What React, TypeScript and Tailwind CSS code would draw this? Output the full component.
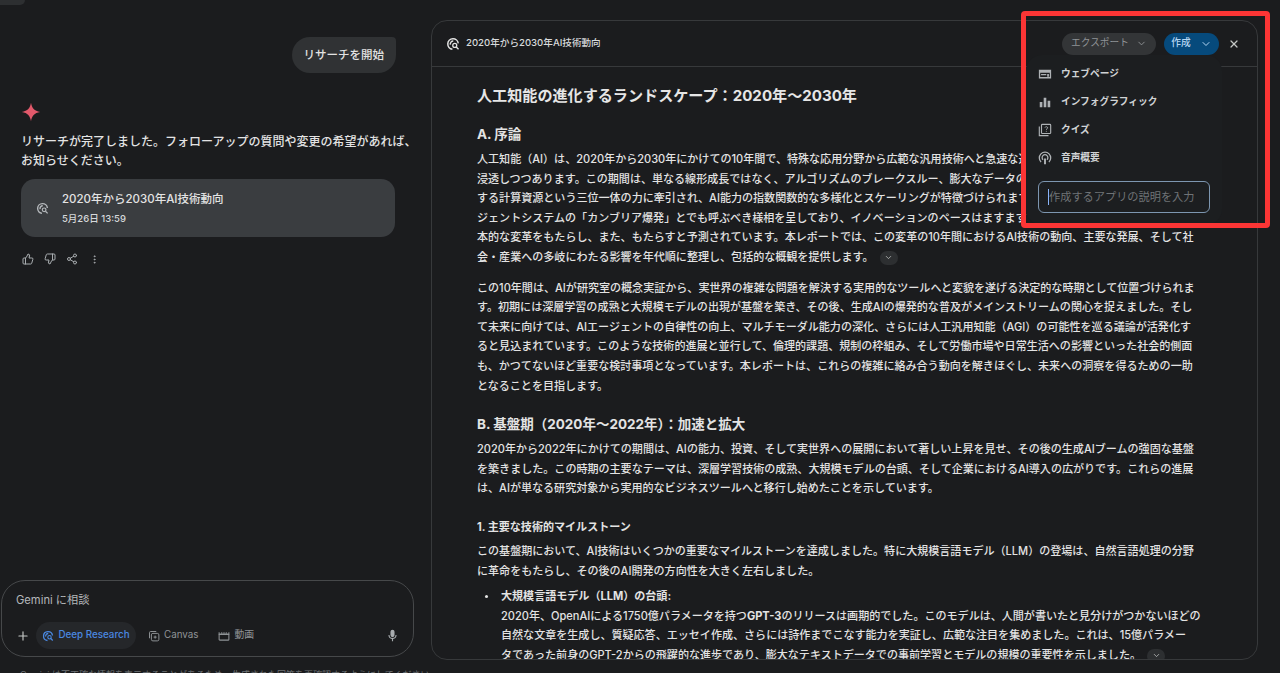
import type { ReactNode } from 'react'
import { ChevronDown, X, Plus, ThumbsUp, ThumbsDown, Share2, MoreVertical } from 'lucide-react'

function ResearchIcon({ className }: { className?: string }) {
  return (
    <svg viewBox="0 0 24 24" fill="none" stroke="currentColor" strokeWidth="2.6" className={className}>
      <path d="M11 21a9 9 0 1 1 10-10" />
      <path d="M7.500 13a5 5 0 0 1 5-6" />
      <circle cx="15" cy="14.500" r="3.400" strokeWidth="2.200" />
      <path d="M17.500 17l4 4" strokeWidth="2.400" />
    </svg>
  )
}

function MoreChip() {
  return (
    <span className="ml-[6px] inline-flex h-[14px] w-[18px] items-center justify-center rounded-full bg-[#2d2f31] align-middle">
      <ChevronDown size={9} className="text-[#c4c7c5]" />
    </span>
  )
}

function MenuItem({ icon, label }: { icon: ReactNode; label: string }) {
  return (
    <div className="flex h-7 items-center gap-[9px] pl-[12px]">
      <span className="flex h-[14px] w-[14px] items-center justify-center text-[#aeb2b5]">{icon}</span>
      <span className="text-[9.700px] font-bold text-[#cfd2d4]">{label}</span>
    </div>
  )
}

function CreateMenu() {
  return (
    <div className="absolute left-[594px] top-[34px] z-10 w-[196px] rounded-2xl bg-[#1c1e20] pt-[5px] pb-3">
      <MenuItem
        label="ウェブページ"
        icon={
          <svg viewBox="0 0 16 16" className="h-[14px] w-[14px]" fill="currentColor">
            <path d="M1 3h14v10H1zM2.500 6.500v5h11v-5zM3.500 8h6v1.300h-6zM10.500 8h2v3h-2z" fillRule="evenodd" />
          </svg>
        }
      />
      <MenuItem
        label="インフォグラフィック"
        icon={
          <svg viewBox="0 0 16 16" className="h-[14px] w-[14px]" fill="currentColor">
            <path d="M2 8h3v6H2zM6.500 3h3v11h-3zM11 6.500h3V14h-3z" />
          </svg>
        }
      />
      <MenuItem
        label="クイズ"
        icon={
          <svg viewBox="0 0 16 16" className="h-[14px] w-[14px]" fill="none" stroke="currentColor" strokeWidth="1.300">
            <rect x="4" y="1.500" width="10.500" height="10.500" rx="1" />
            <path d="M1.500 4v10.500H12" />
            <path d="M8 5.200c.4-1.400 3-1.300 3 .3 0 1.100-1.500 1.200-1.500 2.300M9.500 9v1" strokeWidth="1" />
          </svg>
        }
      />
      <MenuItem
        label="音声概要"
        icon={
          <svg viewBox="0 0 16 16" className="h-[14px] w-[14px]" fill="none" stroke="currentColor" strokeWidth="1.500">
            <path d="M3.500 12.500a6.500 6.500 0 1 1 9 0" />
            <path d="M5.800 10a3.300 3.300 0 1 1 4.400 0" />
            <path d="M8 8.500V15" strokeWidth="2.200" />
          </svg>
        }
      />
      <div className="mx-3 mt-[9px] flex h-8 items-center rounded-md border border-[#7d96b0] px-[9px]">
        <span className="h-4 w-px bg-[#8ab4f8]" />
        <span className="text-[11.200px] text-[#6f7376]">作成するアプリの説明を入力</span>
      </div>
    </div>
  )
}

function Para({ lines, className }: { lines: ReactNode[]; className?: string }) {
  return (
    <div className={`text-[11.050px] font-medium leading-[19.600px] text-[#e3e3e3] ${className ?? ''}`}>
      {lines.map((l, i) => (
        <p key={i} className="whitespace-nowrap">
          {l}
        </p>
      ))}
    </div>
  )
}

function ReportPanel() {
  return (
    <section className="relative flex h-[640px] w-[827px] shrink-0 flex-col overflow-hidden rounded-2xl border border-[#37393b] bg-[#1b1c1e]">
      <header className="flex h-[46px] shrink-0 items-center border-b border-[#37393b] pr-[17px] pl-[14px]">
        <ResearchIcon className="h-[14px] w-[14px] text-[#e3e3e3]" />
        <span className="ml-[6px] text-[9.600px] font-medium text-[#d8dadc]">2020年から2030年AI技術動向</span>
        <div className="ml-auto flex items-center gap-2">
          <button className="flex h-[22px] w-[94px] items-center justify-center gap-[7px] rounded-full bg-[#333537] text-[9.700px] text-[#8f9396]">
            エクスポート
            <ChevronDown size={11} />
          </button>
          <button className="flex h-[22px] w-[55px] items-center justify-center gap-[9px] rounded-full bg-[#064a7c] text-[9.700px] font-medium text-[#b5d6f2]">
            作成
            <ChevronDown size={12} />
          </button>
          <X size={12} strokeWidth={2.500} className="ml-[1px] text-[#c4c7c5]" />
        </div>
      </header>
      <div className="flex-1 overflow-hidden pt-[18px] pl-[45px]">
        <h1 className="text-[15.100px] leading-[22px] font-bold text-[#e6e6e6]">人工知能の進化するランドスケープ：2020年～2030年</h1>
        <h2 className="mt-[17px] mb-[6px] text-[13.500px] leading-[20px] font-bold text-[#e3e3e3]">A. 序論</h2>
        <Para
          lines={[
            '人工知能（AI）は、2020年から2030年にかけての10年間で、特殊な応用分野から広範な汎用技術へと急速な進',
            '浸透しつつあります。この期間は、単なる線形成長ではなく、アルゴリズムのブレークスルー、膨大なデータの',
            'する計算資源という三位一体の力に牽引され、AI能力の指数関数的な多様化とスケーリングが特徴づけられます',
            'ジェントシステムの「カンブリア爆発」とでも呼ぶべき様相を呈しており、イノベーションのペースはますます',
            '本的な変革をもたらし、また、もたらすと予測されています。本レポートでは、この変革の10年間におけるAI技術の動向、主要な発展、そして社',
            <>
              会・産業への多岐にわたる影響を年代順に整理し、包括的な概観を提供します。
              <MoreChip />
            </>,
          ]}
        />
        <Para
          className="mt-[11px]"
          lines={[
            'この10年間は、AIが研究室の概念実証から、実世界の複雑な問題を解決する実用的なツールへと変貌を遂げる決定的な時期として位置づけられま',
            'す。初期には深層学習の成熟と大規模モデルの出現が基盤を築き、その後、生成AIの爆発的な普及がメインストリームの関心を捉えました。そし',
            'て未来に向けては、AIエージェントの自律性の向上、マルチモーダル能力の深化、さらには人工汎用知能（AGI）の可能性を巡る議論が活発化す',
            'ると見込まれています。このような技術的進展と並行して、倫理的課題、規制の枠組み、そして労働市場や日常生活への影響といった社会的側面',
            'も、かつてないほど重要な検討事項となっています。本レポートは、これらの複雑に絡み合う動向を解きほぐし、未来への洞察を得るための一助',
            'となることを目指します。',
          ]}
        />
        <h2 className="mt-[18px] mb-[6px] text-[13.500px] leading-[20px] font-bold text-[#e3e3e3]">B. 基盤期（2020年～2022年）：加速と拡大</h2>
        <Para
          lines={[
            '2020年から2022年にかけての期間は、AIの能力、投資、そして実世界への展開において著しい上昇を見せ、その後の生成AIブームの強固な基盤',
            'を築きました。この時期の主要なテーマは、深層学習技術の成熟、大規模モデルの台頭、そして企業におけるAI導入の広がりです。これらの進展',
            'は、AIが単なる研究対象から実用的なビジネスツールへと移行し始めたことを示しています。',
          ]}
        />
        <h3 className="mt-[18px] mb-[5px] text-[11.050px] leading-[20px] font-bold text-[#e3e3e3]">1. 主要な技術的マイルストーン</h3>
        <Para
          lines={[
            'この基盤期において、AI技術はいくつかの重要なマイルストーンを達成しました。特に大規模言語モデル（LLM）の登場は、自然言語処理の分野',
            'に革命をもたらし、その後のAI開発の方向性を大きく左右しました。',
          ]}
        />
        <div className="mt-[6px] flex">
          <span className="mt-[8px] ml-[8px] h-[3px] w-[3px] shrink-0 rounded-full bg-[#e3e3e3]" />
          <Para
            className="ml-[13px]"
            lines={[
              <b className="font-bold">大規模言語モデル（LLM）の台頭:</b>,
              <>
                2020年、OpenAIによる1750億パラメータを持つ<b className="font-bold">GPT-3</b>のリリースは画期的でした。このモデルは、人間が書いたと見分けがつかないほどの
              </>,
              '自然な文章を生成し、質疑応答、エッセイ作成、さらには詩作までこなす能力を実証し、広範な注目を集めました。これは、15億パラメー',
              <>
                タであった前身のGPT-2からの飛躍的な進歩であり、膨大なテキストデータでの事前学習とモデルの規模の重要性を示しました。
                <MoreChip />
              </>,
            ]}
          />
        </div>
      </div>
      <CreateMenu />
    </section>
  )
}

function ChatColumn() {
  return (
    <div className="flex h-full w-[431px] shrink-0 flex-col">
      <div className="h-[5px] w-[25px] rounded-br-md bg-[#2d2f31]" />
      <div className="mt-[32px] mr-[35px] self-end rounded-[18px] rounded-tr-[4px] bg-[#303234] px-[12px] py-[10px] text-[11.500px] leading-[16px] font-medium text-[#e3e3e3]">
        リサーチを開始
      </div>
      <svg viewBox="0 0 24 24" className="mt-[29px] ml-[21px] h-[20px] w-[20px]">
        <path d="M12 1c1 6 4 10 11 11-7 1-10 5-11 11-1-6-4-10-11-11 7-1 10-5 11-11z" fill="#e2596b" />
      </svg>
      <p className="mt-[10px] ml-[21px] text-[12px] leading-[19px] font-medium text-[#e3e3e3]">
        リサーチが完了しました。フォローアップの質問や変更の希望があれば、
        <br />
        お知らせください。
      </p>
      <div className="mt-[9px] ml-[21px] flex h-[58px] w-[374px] items-center rounded-[14px] bg-[#3a3d40]">
        <ResearchIcon className="ml-[15px] h-[13px] w-[13px] text-[#b4b8bb]" />
        <div className="ml-[13px]">
          <div className="text-[11.500px] leading-[16px] font-medium text-[#e3e3e3]">2020年から2030年AI技術動向</div>
          <div className="mt-[5px] text-[9.500px] leading-[14px] font-medium text-[#d5d8da]">5月26日 13:59</div>
        </div>
      </div>
      <div className="mt-[16px] ml-[22px] flex items-center gap-[10px] text-[#a8acaf]">
        <ThumbsUp size={12} />
        <ThumbsDown size={12} />
        <Share2 size={12} />
        <MoreVertical size={11} className="ml-[1px]" />
      </div>
      <div className="mt-auto mb-[13px] ml-px flex h-[77px] w-[413px] flex-col rounded-[24px] border border-[#46484a] px-[14px]">
        <div className="mt-[11px] text-[11.200px] leading-[16px] text-[#b4b7ba]">Gemini に相談</div>
        <div className="mt-[14px] flex items-center">
          <Plus size={14} className="text-[#c4c7c5]" />
          <div className="ml-[6px] flex h-[27px] w-[100px] items-center justify-center gap-[4px] rounded-full bg-[#25272a] text-[9.800px] font-medium text-[#4a88e0]">
            <ResearchIcon className="h-[12px] w-[12px]" />
            Deep Research
          </div>
          <div className="ml-[12px] flex items-center gap-[4px] text-[9.800px] text-[#8f9396]">
            <svg viewBox="0 0 16 16" className="h-3 w-3" fill="none" stroke="currentColor" strokeWidth="1.300">
              <path d="M2 11V3.500A1.500 1.500 0 0 1 3.500 2H11" />
              <rect x="4.500" y="4.500" width="10" height="10" rx="2" />
              <path d="M9.500 7.500v4M7.500 9.500h4" />
            </svg>
            Canvas
          </div>
          <div className="ml-[20px] flex items-center gap-[4px] text-[9.800px] text-[#8f9396]">
            <svg viewBox="0 0 16 16" className="h-3 w-3" fill="none" stroke="currentColor" strokeWidth="1.400">
              <rect x="1.500" y="5.500" width="13" height="8" rx="1" />
              <path d="M1.500 3v3h13V3M5 3v2M8 3v2M11 3v2" />
            </svg>
            動画
          </div>
          <svg viewBox="0 0 16 16" className="ml-auto h-[13px] w-[13px] text-[#a8acaf]" fill="currentColor">
            <rect x="5.500" y="1" width="5" height="9" rx="2.500" />
            <path d="M3 7.500h1.300a3.700 3.700 0 0 0 7.400 0H13a5 5 0 0 1-4.300 4.900V15H7.300v-2.600A5 5 0 0 1 3 7.500z" />
          </svg>
        </div>
      </div>
      <div className="ml-[20px] h-[3px] overflow-hidden whitespace-nowrap text-[9px] leading-[9px] text-[#6f7376]">
        Gemini は不正確な情報を表示することがあるため、生成された回答を再確認するようにしてください。
      </div>
    </div>
  )
}

export default function App() {
  return (
    <div className="relative flex h-[673px] w-[1280px] overflow-hidden bg-[#1b1c1e] font-['Inter','Noto_Sans_CJK_JP',sans-serif]">
      <ChatColumn />
      <div className="pt-5">
        <ReportPanel />
      </div>
      <div className="absolute left-[1021px] top-[11px] z-20 h-[217px] w-[249px] rounded-[4px] border-[5px] border-[#fb3535]" />
    </div>
  )
}
